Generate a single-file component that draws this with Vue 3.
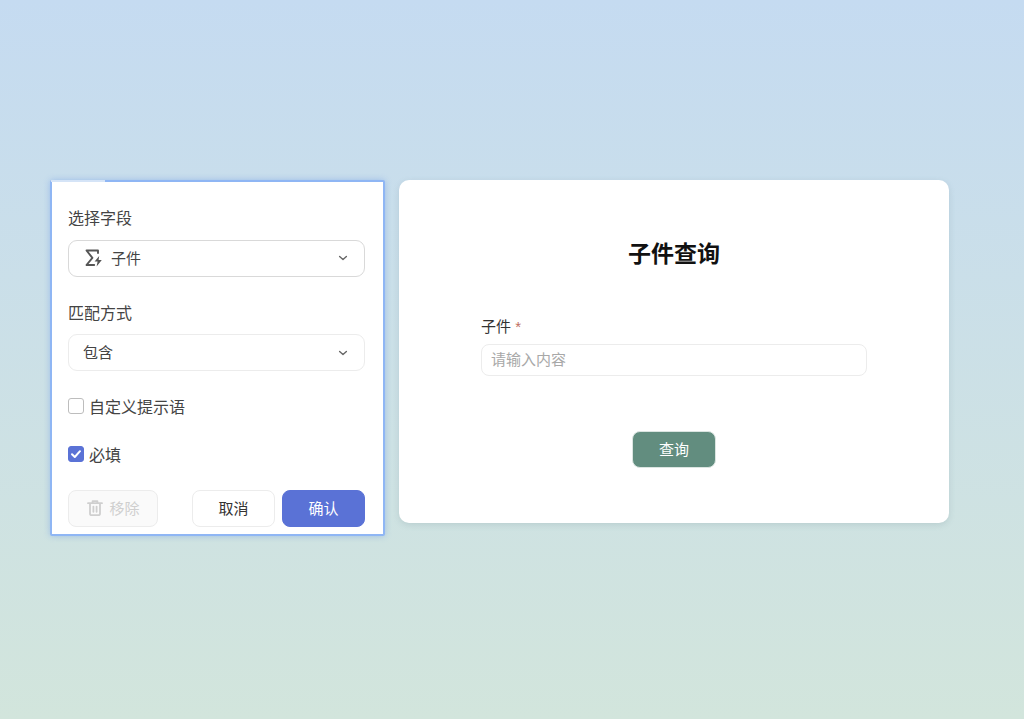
<template>
  <div class="page">
    <div class="config">
      <div class="field">
        <div class="field-label">选择字段</div>
        <div class="select active">
          <svg class="sigma" width="18" height="18" viewBox="0 0 18 18" fill="none">
            <path d="M13 4V1.5H1.5L7.4 8.8L1.5 16H9.2" stroke="#555" stroke-width="1.9" stroke-linejoin="round" stroke-linecap="round" />
            <path d="M14.2 7L9.6 12.6H12.6L11.6 17.6L16.8 11H13.6L14.2 7Z" fill="#555" />
          </svg>
          <span class="select-text">子件</span>
          <svg class="arrow" width="10" height="6" viewBox="0 0 10 6" fill="none">
            <path d="M1.6 1.4L5 4.4L8.4 1.4" stroke="#666" stroke-width="1.4" stroke-linecap="round" stroke-linejoin="round" />
          </svg>
        </div>
      </div>
      <div class="field">
        <div class="field-label">匹配方式</div>
        <div class="select">
          <span class="select-text">包含</span>
          <svg class="arrow" width="10" height="6" viewBox="0 0 10 6" fill="none">
            <path d="M1.6 1.4L5 4.4L8.4 1.4" stroke="#666" stroke-width="1.4" stroke-linecap="round" stroke-linejoin="round" />
          </svg>
        </div>
      </div>
      <label class="check check-first">
        <span class="box"></span>
        <span>自定义提示语</span>
      </label>
      <label class="check check-second">
        <span class="box checked">
          <svg width="12" height="10" viewBox="0 0 12 10" fill="none">
            <path d="M2 5.2L4.8 8L10 2.2" stroke="#fff" stroke-width="2" stroke-linecap="round" stroke-linejoin="round" />
          </svg>
        </span>
        <span>必填</span>
      </label>
      <div class="actions">
        <button class="btn remove">
          <svg width="18" height="18" viewBox="0 0 18 18" fill="none">
            <path d="M2 4.2H16M6.6 4V2.2H11.4V4M4 4.4V14.4C4 15.6 4.6 16.2 5.8 16.2H12.2C13.4 16.2 14 15.6 14 14.4V4.4M7.4 7.6V12.8M10.6 7.6V12.8" stroke="#cfcfcf" stroke-width="1.8" stroke-linecap="round" stroke-linejoin="round" />
          </svg>
          移除
        </button>
        <div class="actions-right">
          <button class="btn cancel">取消</button>
          <button class="btn confirm">确认</button>
        </div>
      </div>
    </div>

    <div class="preview">
      <h2 class="title">子件查询</h2>
      <div class="form-item">
        <div class="form-label">子件 <span class="star">*</span></div>
        <input class="input" placeholder="请输入内容" />
      </div>
      <button class="btn query">查询</button>
    </div>
  </div>
</template>

<script setup>
</script>

<style>
html,
body {
  margin: 0;
  padding: 0;
}
</style>

<style scoped>
.page {
  box-sizing: border-box;
  width: 1024px;
  height: 719px;
  padding: 180px 0 0 50px;
  display: flex;
  align-items: flex-start;
  gap: 14px;
  background: linear-gradient(180deg, #c5dbf1 0%, #d2e5dc 100%);
  font-family: "Liberation Sans", "Noto Sans CJK SC", sans-serif;
  overflow: hidden;
}

.config {
  position: relative;
  box-sizing: border-box;
  width: 335px;
  height: 356px;
  padding: 25px 18px 0 16px;
  background: #fff;
  border: 2px solid #8fb6f4;
  border-radius: 2px;
  box-shadow: 0 0 6px rgba(90, 140, 230, 0.4);
}

.config::before {
  content: "";
  position: absolute;
  left: -1px;
  top: -2px;
  width: 54px;
  height: 2px;
  background: #d5e4f7;
}

.field {
  margin-bottom: 25px;
}

.field-label {
  height: 24px;
  line-height: 24px;
  font-size: 16px;
  color: #444;
  margin-bottom: 8.5px;
}

.select {
  box-sizing: border-box;
  height: 37px;
  padding: 0 16px 2px 14px;
  display: flex;
  align-items: center;
  background: #fff;
  border: 1px solid #ececec;
  border-radius: 9px;
  font-size: 15px;
  color: #444;
}

.select.active {
  border-color: #d9d9d9;
  padding-left: 16px;
}

.sigma {
  margin-right: 8px;
  margin-top: 2px;
}

.arrow {
  margin-top: 2px;
}

.select-text {
  flex: 1;
}

.check {
  display: flex;
  align-items: center;
  gap: 5px;
  height: 24px;
  font-size: 16px;
  color: #444;
}

.check-first {
  margin-top: -2px;
}

.check-second {
  margin-top: 24px;
}

.box {
  box-sizing: border-box;
  width: 16px;
  height: 16px;
  display: flex;
  align-items: center;
  justify-content: center;
  background: #fff;
  border: 1px solid #bdbdbd;
  border-radius: 3px;
}

.box.checked {
  background: #5a72d6;
  border-color: #5a72d6;
}

.actions {
  display: flex;
  justify-content: space-between;
  margin-top: 24px;
}

.actions-right {
  display: flex;
  gap: 7px;
}

.btn {
  box-sizing: border-box;
  height: 37px;
  padding: 0 0 2px;
  font-family: inherit;
  font-size: 15px;
  border-radius: 8px;
  border: 1px solid #ececec;
  background: #fff;
  color: #333;
}

.remove {
  width: 90px;
  display: flex;
  align-items: center;
  justify-content: center;
  gap: 5px;
  background: #fafafa;
  color: #cfcfcf;
}

.cancel {
  width: 83px;
}

.confirm {
  width: 83px;
  background: #5a72d6;
  border-color: #5a72d6;
  color: #fff;
}

.preview {
  box-sizing: border-box;
  width: 550px;
  height: 343px;
  padding-top: 57px;
  display: flex;
  flex-direction: column;
  align-items: center;
  background: #fff;
  border-radius: 10px;
  box-shadow: 0 2px 6px rgba(100, 130, 140, 0.2);
}

.title {
  margin: 0;
  height: 34px;
  line-height: 34px;
  font-size: 23px;
  font-weight: 700;
  color: #111;
}

.form-item {
  width: 386px;
  margin-top: 45px;
}

.form-label {
  height: 22px;
  line-height: 22px;
  font-size: 15px;
  color: #333;
  margin-bottom: 6px;
}

.star {
  color: #c0705f;
}

.input {
  display: block;
  box-sizing: border-box;
  width: 100%;
  height: 32px;
  padding: 0 9px 1px;
  border: 1px solid #ececec;
  border-radius: 8px;
  outline: none;
  font-family: inherit;
  font-size: 15px;
  color: #333;
}

.input::placeholder {
  color: #a8a8a8;
}

.query {
  width: 84px;
  margin-top: 55px;
  background: #628d7f;
  border-color: #dbe5e1;
  color: #fff;
  font-size: 15px;
}
</style>
